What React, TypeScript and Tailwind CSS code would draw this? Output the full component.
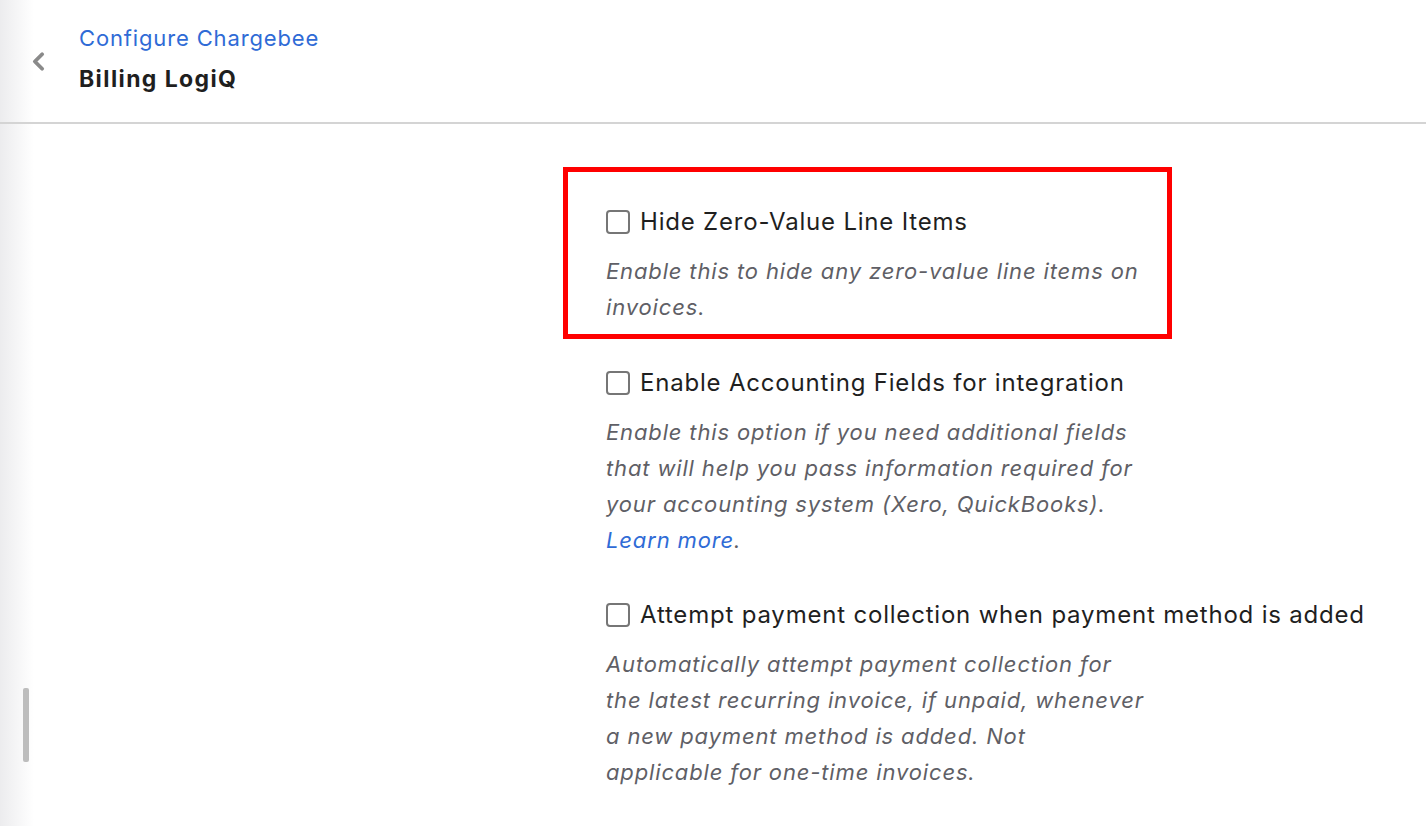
import { ChevronLeft } from 'lucide-react';

const font = { fontFamily: 'Inter, "Noto Sans", sans-serif' };

function Option({ label, children }: { label: string; children: React.ReactNode }) {
  return (
    <div>
      <label className="flex items-center gap-[10px] text-[24px] leading-[32px] tracking-[0.8px] text-[#1f1f1f]">
        <span className="w-[24px] h-[24px] shrink-0 rounded-[4px] border-2 border-[#767676] bg-white" />
        {label}
      </label>
      <p className="mt-[15px] text-[22px] leading-[36px] italic tracking-[0.85px] text-[#5f5f66] whitespace-nowrap">
        {children}
      </p>
    </div>
  );
}

export default function App() {
  return (
    <div className="relative w-[1426px] h-[826px] overflow-hidden bg-white" style={font}>
      <div className="absolute left-0 top-0 bottom-0 w-[34px] bg-gradient-to-r from-[#ececee] to-white" />
      <div className="absolute left-[23px] top-[688px] w-[6px] h-[74px] rounded-[2px] bg-[#bdbdbd]" />

      <header className="relative flex items-center h-[124px] border-b-2 border-[#d4d4d4]">
        <ChevronLeft className="ml-[24px] w-[29px] h-[29px] text-[#8a8a8a]" strokeWidth={3.2} />
        <div className="ml-[26px] -mt-[6px]">
          <div className="text-[22px] leading-[32px] tracking-[0.85px] text-[#2f6bd6]">Configure Chargebee</div>
          <div className="mt-[10px] text-[23px] leading-[30px] font-bold tracking-[1.4px] text-[#1f1f1f]">Billing LogiQ</div>
        </div>
      </header>

      <main className="relative pl-[563px] pt-[43px]">
        <div className="w-[609px] border-[5px] border-[#ff0000] pl-[38px] pt-[34px] pb-[9px]">
          <Option label="Hide Zero-Value Line Items">
            Enable this to hide any zero-value line items on
            <br />
            invoices.
          </Option>
        </div>
        <div className="pl-[43px] pt-[28px] flex flex-col gap-[41px]">
          <Option label="Enable Accounting Fields for integration">
            Enable this option if you need additional fields
            <br />
            that will help you pass information required for
            <br />
            your accounting system (Xero, QuickBooks).
            <br />
            <span className="text-[#2f6bd6]">Learn more</span>.
          </Option>
          <Option label="Attempt payment collection when payment method is added">
            Automatically attempt payment collection for
            <br />
            the latest recurring invoice, if unpaid, whenever
            <br />
            a new payment method is added. Not
            <br />
            applicable for one-time invoices.
          </Option>
        </div>
      </main>
    </div>
  );
}
